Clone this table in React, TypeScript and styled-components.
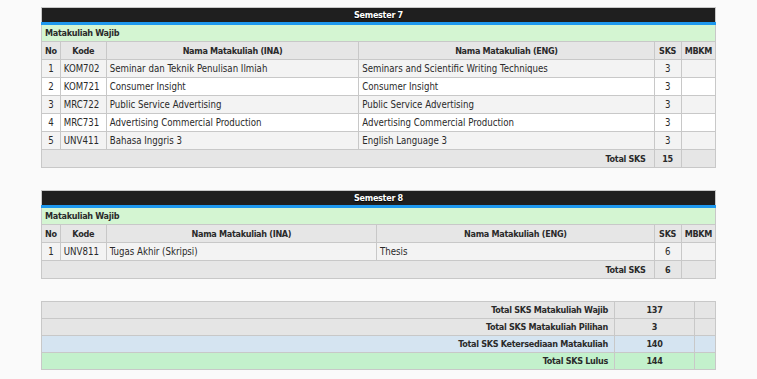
import React from "react";
import styled, { createGlobalStyle } from "styled-components";

const GlobalStyle = createGlobalStyle`
  body {
    margin: 0;
    background: #fafafa;
    font-family: "DejaVu Sans Condensed", "DejaVu Sans", Tahoma, sans-serif;
    font-size: 9.6px;
    color: #2a2a2a;
  }
`;

const Page = styled.div`
  padding: 7px 41px 0 41px;
  display: flex;
  flex-direction: column;
  gap: 22px;
`;

const Table = styled.table`
  width: 675px;
  border-collapse: collapse;
  border: 1px solid #c8c8c8;
`;

const boldText = `
  font-weight: bold;
  font-size: 9px;
  letter-spacing: -0.3px;
`;

const TitleCell = styled.th`
  ${boldText}
  background: #1f1f1f;
  color: #fff;
  height: 14px;
  padding: 0;
  text-align: center;
  border-bottom: 3px solid #1e98ee;
  text-shadow: 0 1px 1px #000;
`;

const GroupCell = styled.td`
  ${boldText}
  background: #d4f5d2;
  height: 16px;
  padding: 0 3px;
  border: 1px solid #c8c8c8;
`;

const HeadCell = styled.th<{ $w?: number }>`
  ${boldText}
  background: #e6e6e6;
  height: 17px;
  padding: 0 3px;
  border: 1px solid #c8c8c8;
  text-align: center;
  width: ${(p) => (p.$w ? `${p.$w}px` : "auto")};
`;

const Row = styled.tr<{ $odd: boolean }>`
  background: ${(p) => (p.$odd ? "#f3f3f3" : "#ffffff")};
`;

const Cell = styled.td<{ $center?: boolean }>`
  height: 17px;
  padding: 0 3px;
  border: 1px solid #c8c8c8;
  text-align: ${(p) => (p.$center ? "center" : "left")};
  white-space: nowrap;
`;

const TotalRow = styled.tr`
  background: #e6e6e6;
`;

const TotalCell = styled(Cell)`
  ${boldText}
`;

const SumRow = styled.tr<{ $tone: "gray" | "blue" | "green" }>`
  background: ${(p) =>
    p.$tone === "blue" ? "#d5e4f1" : p.$tone === "green" ? "#c3f1cc" : "#e5e5e5"};
`;

const SumLabel = styled.td`
  ${boldText}
  height: 16px;
  padding: 0 6px;
  border: 1px solid #c8c8c8;
  text-align: right;
`;

const SumValue = styled.td`
  ${boldText}
  width: 67px;
  padding: 0 6px;
  border: 1px solid #c8c8c8;
  text-align: center;
`;

const SumBlank = styled.td`
  width: 18px;
  border: 1px solid #c8c8c8;
`;

interface ICourse {
  kode: string;
  ina: string;
  eng: string;
  sks: number;
}

const semesters: { title: string; courses: ICourse[] }[] = [
  {
    title: "Semester 7",
    courses: [
      { kode: "KOM702", ina: "Seminar dan Teknik Penulisan Ilmiah", eng: "Seminars and Scientific Writing Techniques", sks: 3 },
      { kode: "KOM721", ina: "Consumer Insight", eng: "Consumer Insight", sks: 3 },
      { kode: "MRC722", ina: "Public Service Advertising", eng: "Public Service Advertising", sks: 3 },
      { kode: "MRC731", ina: "Advertising Commercial Production", eng: "Advertising Commercial Production", sks: 3 },
      { kode: "UNV411", ina: "Bahasa Inggris 3", eng: "English Language 3", sks: 3 },
    ],
  },
  {
    title: "Semester 8",
    courses: [{ kode: "UNV811", ina: "Tugas Akhir (Skripsi)", eng: "Thesis", sks: 6 }],
  },
];

const summary: { label: string; value: number; tone: "gray" | "blue" | "green" }[] = [
  { label: "Total SKS Matakuliah Wajib", value: 137, tone: "gray" },
  { label: "Total SKS Matakuliah Pilihan", value: 3, tone: "gray" },
  { label: "Total SKS Ketersediaan Matakuliah", value: 140, tone: "blue" },
  { label: "Total SKS Lulus", value: 144, tone: "green" },
];

const SemesterTable = ({ title, courses }: { title: string; courses: ICourse[] }) => {
  const total = courses.reduce((s, c) => s + c.sks, 0);
  return (
    <Table>
      <thead>
        <tr>
          <TitleCell colSpan={6}>{title}</TitleCell>
        </tr>
      </thead>
      <tbody>
        <tr>
          <GroupCell colSpan={6}>Matakuliah Wajib</GroupCell>
        </tr>
        <tr>
          <HeadCell $w={8}>No</HeadCell>
          <HeadCell $w={39}>Kode</HeadCell>
          <HeadCell>Nama Matakuliah (INA)</HeadCell>
          <HeadCell>Nama Matakuliah (ENG)</HeadCell>
          <HeadCell $w={20}>SKS</HeadCell>
          <HeadCell $w={25}>MBKM</HeadCell>
        </tr>
        {courses.map((c, i) => (
          <Row key={c.kode} $odd={i % 2 === 0}>
            <Cell $center>{i + 1}</Cell>
            <Cell>{c.kode}</Cell>
            <Cell>{c.ina}</Cell>
            <Cell>{c.eng}</Cell>
            <Cell $center>{c.sks}</Cell>
            <Cell />
          </Row>
        ))}
        <TotalRow>
          <TotalCell colSpan={4} style={{ textAlign: "right", paddingRight: 8 }}>
            Total SKS
          </TotalCell>
          <TotalCell $center>{total}</TotalCell>
          <TotalCell />
        </TotalRow>
      </tbody>
    </Table>
  );
};

const App = () => {
  return (
    <>
      <GlobalStyle />
      <Page>
        {semesters.map((s) => (
          <SemesterTable key={s.title} title={s.title} courses={s.courses} />
        ))}
        <Table>
          <tbody>
            {summary.map((r) => (
              <SumRow key={r.label} $tone={r.tone}>
                <SumLabel>{r.label}</SumLabel>
                <SumValue>{r.value}</SumValue>
                <SumBlank />
              </SumRow>
            ))}
          </tbody>
        </Table>
      </Page>
    </>
  );
};

export default App;
